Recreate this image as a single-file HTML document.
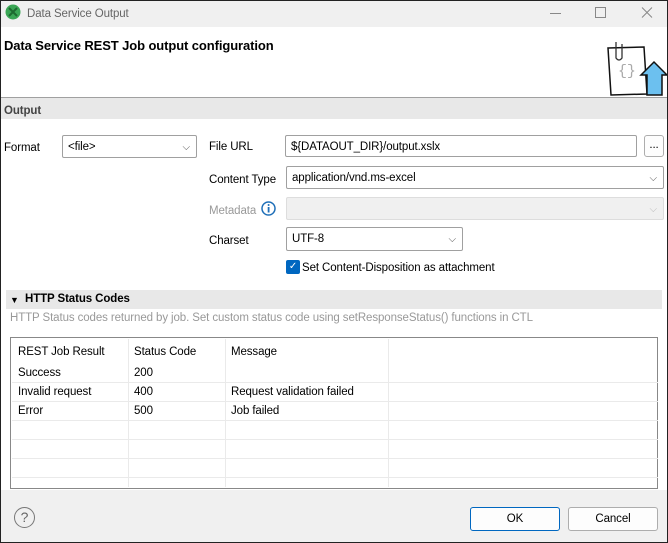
<!DOCTYPE html>
<html><head><meta charset="utf-8"><style>
*{box-sizing:border-box;margin:0;padding:0}
body{width:668px;height:543px;position:relative;overflow:hidden;font-family:"Liberation Sans",sans-serif;font-size:11.5px;line-height:17px;color:#000;background:#fff;letter-spacing:-0.1px}
.a{position:absolute}
.win{left:0;top:0;width:668px;height:543px;border:1px solid #222}
.combo{position:absolute;background:#fff;border:1px solid #a0a0a0;border-radius:2px;padding:3px 5px 0;font-size:11.5px}
.combo .ar{position:absolute;right:6px;top:3px;color:#555;font-size:10px}
.lab{position:absolute;font-size:11.5px;margin-top:2px}
.row{position:absolute;left:1px;width:646px;border-top:1px solid #eaeaea}
.col{position:absolute;top:1px;bottom:1px;border-left:1px solid #eaeaea}
.btn{position:absolute;background:#fdfdfd;border:1px solid #adadad;border-radius:3px;text-align:center;line-height:22px}
</style></head><body>
<div class="a" style="left:0;top:0;width:668px;height:27px;background:#f0f0f0"></div>
<svg class="a" style="left:5px;top:4px" width="16" height="16"><circle cx="8" cy="8" r="7.5" fill="#3aa655"/><path d="M4 4 L12 12 M12 4 L4 12" stroke="#1d6b30" stroke-width="2"/></svg>
<div class="lab" style="left:27px;top:4px;color:#666">Data Service Output</div>
<svg class="a" style="left:548px;top:6px" width="110" height="14">
<path d="M2 7.5 H13" stroke="#888" stroke-width="1"/>
<rect x="47.5" y="1.5" width="10" height="10" fill="none" stroke="#888"/>
<path d="M94 1.5 L104 11.5 M104 1.5 L94 11.5" stroke="#888" stroke-width="1"/>
</svg>
<div class="a" style="left:0;top:27px;width:668px;height:70px;background:#fff"></div>
<div class="lab" style="left:4px;top:35px;font-size:13px;font-weight:bold">Data Service REST Job output configuration</div>
<svg class="a" style="left:604px;top:40px" width="64" height="56">
<path d="M4 8 L40 7 L43 54 L7 55 Z" fill="#fff" stroke="#111" stroke-width="1.5"/>
<path d="M12 2 L12 18 Q15 22 18 18 L18 4" fill="none" stroke="#333" stroke-width="1.3"/>
<text x="14" y="35" font-size="15" fill="#aaa" font-family="Liberation Mono">{}</text>
<path d="M50 22 L63 35 L58 35 L58 55 L43 55 L43 35 L37 35 Z" fill="#6cc0ef" stroke="#111" stroke-width="1.5"/>
</svg>
<div class="a" style="left:0;top:97px;width:668px;height:1px;background:#a0a0a0"></div>
<div class="a" style="left:0;top:98px;width:668px;height:21px;background:#e8e8e8"></div>
<div class="lab" style="left:4px;top:101px;font-weight:bold;color:#444">Output</div>

<div class="lab" style="left:4px;top:138px">Format</div>
<div class="combo" style="left:62px;top:135px;width:135px;height:23px">&lt;file&gt;<span class="ar">⌵</span></div>
<div class="lab" style="left:209px;top:137px">File URL</div>
<div class="combo" style="left:285px;top:135px;width:352px;height:22px">${DATAOUT_DIR}/output.xslx</div>
<div class="btn" style="left:644px;top:135px;width:20px;height:22px;line-height:18px">...</div>
<div class="lab" style="left:209px;top:170px">Content Type</div>
<div class="combo" style="left:286px;top:166px;width:378px;height:23px">application/vnd.ms-excel<span class="ar">⌵</span></div>
<div class="lab" style="left:209px;top:201px;color:#999">Metadata</div>
<svg class="a" style="left:261px;top:201px" width="15" height="15"><circle cx="7.5" cy="7.5" r="6.5" fill="#fff" stroke="#1f6fb8" stroke-width="1.5"/><rect x="6.7" y="6" width="1.8" height="5.5" fill="#1f6fb8"/><circle cx="7.6" cy="4" r="1" fill="#1f6fb8"/></svg>
<div class="combo" style="left:286px;top:197px;width:378px;height:23px;background:#f0f0f0;border-color:#ddd"><span class="ar" style="color:#bbb">⌵</span></div>
<div class="lab" style="left:209px;top:231px">Charset</div>
<div class="combo" style="left:286px;top:227px;width:177px;height:24px">UTF-8<span class="ar">⌵</span></div>
<div class="a" style="left:286px;top:260px;width:14px;height:14px;background:#0067c0;border-radius:2px;color:#fff;font-size:10px;line-height:14px;text-align:center">✓</div>
<div class="lab" style="left:302px;top:258px">Set Content-Disposition as attachment</div>

<div class="a" style="left:6px;top:290px;width:656px;height:19px;background:#e8e8e8"></div>
<div class="lab" style="left:10px;top:290px;font-size:9px">▼</div>
<div class="lab" style="left:25px;top:289px;font-weight:bold">HTTP Status Codes</div>
<div class="lab" style="left:10px;top:308px;color:#999">HTTP Status codes returned by job. Set custom status code using setResponseStatus() functions in CTL</div>

<div class="a" style="left:10px;top:337px;width:648px;height:152px;border:1px solid #888;background:#fff">
<div class="col" style="left:117px"></div><div class="col" style="left:214px"></div><div class="col" style="left:377px"></div>
<div class="row" style="top:44px"></div><div class="row" style="top:63px"></div><div class="row" style="top:82px"></div><div class="row" style="top:101px"></div><div class="row" style="top:120px"></div><div class="row" style="top:139px"></div>
<div class="lab" style="left:7px;top:4px">REST Job Result</div><div class="lab" style="left:123px;top:4px">Status Code</div><div class="lab" style="left:220px;top:4px">Message</div>
<div class="lab" style="left:7px;top:25px">Success</div><div class="lab" style="left:123px;top:25px">200</div>
<div class="lab" style="left:7px;top:44px">Invalid request</div><div class="lab" style="left:123px;top:44px">400</div><div class="lab" style="left:220px;top:44px">Request validation failed</div>
<div class="lab" style="left:7px;top:63px">Error</div><div class="lab" style="left:123px;top:63px">500</div><div class="lab" style="left:220px;top:63px">Job failed</div>
</div>

<div class="a" style="left:1px;top:490px;width:666px;height:52px;background:#f0f0f0"></div>
<div class="a" style="left:14px;top:507px;width:21px;height:21px;border:1.5px solid #777;border-radius:50%;text-align:center;line-height:18px;font-size:14px;color:#666">?</div>
<div class="btn" style="left:470px;top:507px;width:90px;height:24px;border-color:#0067c0">OK</div>
<div class="btn" style="left:568px;top:507px;width:90px;height:24px">Cancel</div>
<div class="a win"></div>
</body></html>
